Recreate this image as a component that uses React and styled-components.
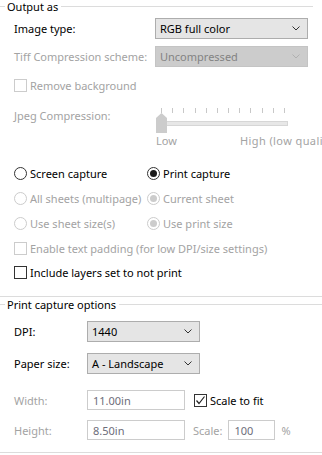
import React from 'react'
import styled, { createGlobalStyle } from 'styled-components'

const GlobalStyle = createGlobalStyle`
  html, body {
    margin: 0;
    padding: 0;
    background: #ffffff;
  }
  body {
    font-family: "Noto Sans", "Open Sans", sans-serif;
    font-size: 11px;
    color: #000;
  }
`

const Page = styled.div`
  width: 322px;
  height: 455px;
  overflow: hidden;
  background: #fff;
`

const Group = styled.section`
  display: flex;
  flex-direction: column;
  border-bottom: 1px solid #dcdcdc;
  padding-bottom: ${p => p.$bottom}px;
  margin-top: ${p => p.$top || 0}px;
`

const Legend = styled.div`
  display: flex;
  align-items: center;
  height: 13px;
  margin-right: ${p => p.$right || 0}px;

  &::before {
    content: '';
    width: 5px;
    height: 1px;
    background: #dcdcdc;
  }
  &::after {
    content: '';
    flex: 1;
    height: 1px;
    background: #dcdcdc;
  }
`

const LegendText = styled.span`
  padding: 0 3px 0 2px;
  line-height: 13px;
  white-space: nowrap;
`

const Row = styled.div`
  display: flex;
  align-items: center;
  height: ${p => p.$h || 21}px;
  margin-top: ${p => p.$mt || 0}px;
  padding-left: 14px;
`

const Label = styled.span`
  width: ${p => p.$w}px;
  flex-shrink: 0;
  color: ${p => (p.$disabled ? '#a3a3a3' : '#000')};
  white-space: nowrap;
`

const SelectBox = styled.div`
  display: flex;
  align-items: center;
  justify-content: space-between;
  box-sizing: border-box;
  width: ${p => p.$w}px;
  height: 21px;
  padding: 0 7px 0 4px;
  background: ${p => (p.$disabled ? '#cccccc' : '#e5e5e5')};
  border: 1px solid ${p => (p.$disabled ? '#c4c4c4' : '#adadad')};
  color: ${p => (p.$disabled ? '#838383' : '#000')};
  white-space: nowrap;

  svg {
    stroke: ${p => (p.$disabled ? '#b0b0b0' : '#333')};
  }
`

const Chevron = () => (
  <svg width="8" height="5" viewBox="0 0 8 5" fill="none" strokeWidth="1">
    <polyline points="0.5,0.5 4,4 7.5,0.5" />
  </svg>
)

const Select = ({ value, width, disabled }) => (
  <SelectBox $w={width} $disabled={disabled}>
    <span>{value}</span>
    <Chevron />
  </SelectBox>
)

const Box = styled.span`
  display: inline-flex;
  align-items: center;
  justify-content: center;
  box-sizing: border-box;
  width: 13px;
  height: 13px;
  border: 1px solid ${p => (p.$disabled ? '#cccccc' : '#333333')};
  background: #fff;
  margin-right: 3px;
  flex-shrink: 0;
`

const Check = styled.label`
  display: flex;
  align-items: center;
  color: ${p => (p.$disabled ? '#a3a3a3' : '#000')};
  white-space: nowrap;
  margin-left: ${p => p.$ml || 0}px;
`

const Checkbox = ({ label, checked, disabled, ml }) => (
  <Check $disabled={disabled} $ml={ml}>
    <Box $disabled={disabled}>
      {checked && (
        <svg width="11" height="11" viewBox="0 0 11 11" fill="none" stroke="#222" strokeWidth="1.2">
          <polyline points="1.5,5.5 4,8.5 9.5,1.5" />
        </svg>
      )}
    </Box>
    {label}
  </Check>
)

const RadioGrid = styled.div`
  display: grid;
  grid-template-columns: 133px 1fr;
  grid-auto-rows: 25px;
  align-items: center;
  padding-left: 14px;
  margin-top: 13px;
`

const Dot = styled.span`
  display: inline-flex;
  align-items: center;
  justify-content: center;
  box-sizing: border-box;
  width: 13px;
  height: 13px;
  border-radius: 50%;
  border: 1px solid ${p => (p.$disabled ? '#cccccc' : '#333333')};
  margin-right: 3px;
  flex-shrink: 0;

  &::after {
    content: '';
    display: ${p => (p.$on ? 'block' : 'none')};
    width: 7px;
    height: 7px;
    border-radius: 50%;
    background: ${p => (p.$disabled ? '#cccccc' : '#1a1a1a')};
  }
`

const Radio = ({ label, on, disabled }) => (
  <Check $disabled={disabled}>
    <Dot $on={on} $disabled={disabled} />
    {label}
  </Check>
)

const JpegRow = styled.div`
  display: flex;
  padding-left: 14px;
  margin-top: 12px;
`

const JpegLabel = styled.span`
  width: 141px;
  flex-shrink: 0;
  color: #a3a3a3;
  line-height: 12px;
  margin-top: 3px;
`

const Slider = styled.div`
  display: flex;
  flex-direction: column;
  width: 167px;
`

const Ticks = styled.div`
  display: flex;
  justify-content: space-between;
  width: 124px;
  margin: 1px 0 0 6px;
  height: 5px;

  span {
    width: 1px;
    height: 5px;
    background: #c8c8c8;
  }
`

const TrackArea = styled.div`
  position: relative;
  height: 20px;
  display: flex;
  align-items: center;
`

const Track = styled.div`
  box-sizing: border-box;
  margin-left: 4px;
  width: 129px;
  height: 5px;
  background: #e7e7e7;
  border: 1px solid #d6d6d6;
`

const Thumb = styled.svg`
  position: absolute;
  left: 1px;
  top: 0;
`

const SliderLabels = styled.div`
  display: flex;
  color: #a3a3a3;
  height: 15px;
  line-height: 15px;
  white-space: nowrap;
  margin-left: 1px;
  letter-spacing: 0.4px;

  span {
    flex-shrink: 0;
  }
  span:first-child {
    width: 84px;
    letter-spacing: 0;
  }
`

const Field = styled.div`
  box-sizing: border-box;
  width: ${p => p.$w}px;
  height: 20px;
  display: flex;
  align-items: center;
  padding-left: 5px;
  border: 1px solid #cccccc;
  color: #6d6d7a;
  flex-shrink: 0;
`

const Muted = styled.span`
  color: #a3a3a3;
  margin: ${p => p.$m};
  white-space: nowrap;
`

const ticks = Array.from({ length: 12 })

export default function App() {
  return (
    <Page>
      <GlobalStyle />
      <Group $bottom={12}>
        <Legend $right={9}>
          <LegendText>Output as</LegendText>
        </Legend>
        <Row $mt={5}>
          <Label $w={141}>Image type:</Label>
          <Select value="RGB full color" width={153} />
        </Row>
        <Row $mt={7}>
          <Label $w={141} $disabled>Tiff Compression scheme:</Label>
          <Select value="Uncompressed" width={153} disabled />
        </Row>
        <Row $h={20} $mt={8}>
          <Checkbox label="Remove background" disabled />
        </Row>
        <JpegRow>
          <JpegLabel>Jpeg Compression:</JpegLabel>
          <Slider>
            <Ticks>
              {ticks.map((_, i) => (
                <span key={i} />
              ))}
            </Ticks>
            <TrackArea>
              <Track />
              <Thumb width="11" height="20" viewBox="0 0 11 20">
                <polygon points="5.5,0 11,5 11,20 0,20 0,5" fill="#cccccc" />
              </Thumb>
            </TrackArea>
            <SliderLabels>
              <span>Low</span>
              <span>High (low quality)</span>
            </SliderLabels>
          </Slider>
        </JpegRow>
        <RadioGrid>
          <Radio label="Screen capture" />
          <Radio label="Print capture" on />
          <Radio label="All sheets (multipage)" disabled />
          <Radio label="Current sheet" on disabled />
          <Radio label="Use sheet size(s)" disabled />
          <Radio label="Use print size" on disabled />
        </RadioGrid>
        <Row $h={25}>
          <Checkbox label="Enable text padding (for low DPI/size settings)" disabled />
        </Row>
        <Row $h={23}>
          <Checkbox label="Include layers set to not print" />
        </Row>
      </Group>

      <Group $top={1} $bottom={12}>
        <Legend>
          <LegendText>Print capture options</LegendText>
        </Legend>
        <Row $mt={10}>
          <Label $w={73}>DPI:</Label>
          <Select value="1440" width={113} />
        </Row>
        <Row $mt={11}>
          <Label $w={73}>Paper size:</Label>
          <Select value="A - Landscape" width={113} />
        </Row>
        <Row $h={20} $mt={16}>
          <Label $w={73} $disabled>Width:</Label>
          <Field $w={98}>11.00in</Field>
          <Checkbox label="Scale to fit" checked ml={9} />
        </Row>
        <Row $h={20} $mt={10}>
          <Label $w={73} $disabled>Height:</Label>
          <Field $w={98}>8.50in</Field>
          <Muted $m="0 6px 0 8px">Scale:</Muted>
          <Field $w={47}>100</Field>
          <Muted $m="0 0 0 6px">%</Muted>
        </Row>
      </Group>
    </Page>
  )
}
